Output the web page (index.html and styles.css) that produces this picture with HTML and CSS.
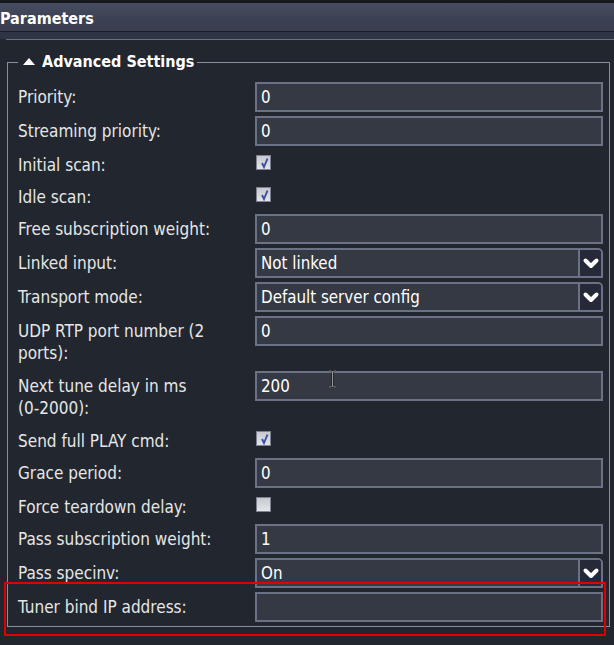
FILE: index.html
```html
<!DOCTYPE html>
<html>
<head>
<meta charset="utf-8">
<link rel="stylesheet" href="styles.css">
</head>
<body>
<div class="page">
  <div class="topbar"></div>
  <div class="header"><span class="title">Parameters</span></div>
  <div class="band"></div>
  <div class="content">
    <fieldset class="group">
      <legend class="legend"><span class="tri"></span>Advanced Settings</legend>
      <div class="rows">
        <label class="lbl">Priority:</label>
        <div class="field"><span class="val">0</span></div>

        <label class="lbl">Streaming priority:</label>
        <div class="field"><span class="val">0</span></div>

        <label class="lbl">Initial scan:</label>
        <div class="cbcell"><span class="cb checked"><svg viewBox="0 0 15 15" width="15" height="15"><path d="M6 8 L8 12 L11.5 3.5" fill="none" stroke="#3b4ea3" stroke-width="1.9"/></svg></span></div>

        <label class="lbl">Idle scan:</label>
        <div class="cbcell"><span class="cb checked"><svg viewBox="0 0 15 15" width="15" height="15"><path d="M6 8 L8 12 L11.5 3.5" fill="none" stroke="#3b4ea3" stroke-width="1.9"/></svg></span></div>

        <label class="lbl">Free subscription weight:</label>
        <div class="field"><span class="val">0</span></div>

        <label class="lbl">Linked input:</label>
        <div class="field select"><span class="val">Not linked</span><span class="arrow"><svg viewBox="0 0 18 13" width="18" height="13"><path d="M3.5 3.5 L9 9 L14.5 3.5" fill="none" stroke="#ffffff" stroke-width="4" stroke-linecap="round" stroke-linejoin="round"/></svg></span></div>

        <label class="lbl">Transport mode:</label>
        <div class="field select"><span class="val">Default server config</span><span class="arrow"><svg viewBox="0 0 18 13" width="18" height="13"><path d="M3.5 3.5 L9 9 L14.5 3.5" fill="none" stroke="#ffffff" stroke-width="4" stroke-linecap="round" stroke-linejoin="round"/></svg></span></div>

        <label class="lbl wrap">UDP RTP port number (2 ports):</label>
        <div class="field"><span class="val">0</span></div>

        <label class="lbl wrap">Next tune delay in ms <span class="nowrap">(0-2000):</span></label>
        <div class="field cursorhost"><span class="val">200</span>
          <svg class="ibeam" viewBox="0 0 9 18" width="9" height="18"><path d="M1 1 H3.5 L4.5 2 L5.5 1 H8 M4.5 2 V16 M1 17 H3.5 L4.5 16 L5.5 17 H8" fill="none" stroke="#000000" stroke-width="1.6"/><path d="M1 1 H3.5 L4.5 2 L5.5 1 H8 M4.5 2 V16 M1 17 H3.5 L4.5 16 L5.5 17 H8" fill="none" stroke="#ffffff" stroke-width="0.6"/></svg>
        </div>

        <label class="lbl">Send full PLAY cmd:</label>
        <div class="cbcell"><span class="cb checked"><svg viewBox="0 0 15 15" width="15" height="15"><path d="M6 8 L8 12 L11.5 3.5" fill="none" stroke="#3b4ea3" stroke-width="1.9"/></svg></span></div>

        <label class="lbl">Grace period:</label>
        <div class="field"><span class="val">0</span></div>

        <label class="lbl">Force teardown delay:</label>
        <div class="cbcell"><span class="cb"></span></div>

        <label class="lbl">Pass subscription weight:</label>
        <div class="field"><span class="val">1</span></div>

        <label class="lbl">Pass specinv:</label>
        <div class="field select"><span class="val">On</span><span class="arrow"><svg viewBox="0 0 18 13" width="18" height="13"><path d="M3.5 3.5 L9 9 L14.5 3.5" fill="none" stroke="#ffffff" stroke-width="4" stroke-linecap="round" stroke-linejoin="round"/></svg></span></div>

        <label class="lbl hl">Tuner bind IP address:<span class="redbox"></span></label>
        <div class="field"><span class="val"></span></div>
      </div>
    </fieldset>
  </div>
</div>
</body>
</html>
```
FILE: styles.css
```css
* { box-sizing: border-box; }
html, body {
  margin: 0;
  padding: 0;
  background: #21262f;
}
body {
  width: 614px;
  height: 645px;
  overflow: hidden;
  font-family: "DejaVu Sans Condensed", "DejaVu Sans", sans-serif;
  color: #e8e8e8;
}
.page {
  width: 614px;
  height: 645px;
  background: #21262f;
}
.topbar {
  height: 3px;
  background: #15181f;
}
.header {
  height: 29px;
  background: linear-gradient(#474d60, #3b4153 60%, #393f50);
  border-bottom: 1px solid #1a1d25;
  display: flex;
  align-items: center;
}
.title {
  font-weight: bold;
  font-size: 16px;
  color: #ffffff;
  line-height: 20px;
  margin-top: 3px;
}
.band {
  height: 7px;
  background: #2e3443;
}
.content {
  margin-left: 6px;
  border-top: 1px solid #6b7183;
  padding-top: 11px;
}
.group {
  margin: 0 0 0 1px;
  width: 603px;
  border: 1px solid #8a8f9c;
  padding: 9px 6px 4px 10px;
  min-width: 0;
}
.legend {
  padding: 0 3px 0 4px;
  font-weight: bold;
  font-size: 16px;
  line-height: 22px;
  color: #ffffff;
  display: flex;
  align-items: center;
}
.tri {
  width: 0;
  height: 0;
  border-left: 6px solid transparent;
  border-right: 6px solid transparent;
  border-bottom: 7px solid #ffffff;
  margin: 0 7px 2px 1px;
}
.rows {
  display: grid;
  grid-template-columns: 237px 348px;
  row-gap: 4px;
  align-items: start;
}
.lbl {
  font-size: 17px;
  line-height: 22px;
  padding: 4px 6px 2px 0;
  color: #e6e6e6;
}
.lbl.wrap {
  padding-bottom: 3px;
}
.nowrap {
  white-space: nowrap;
}
.field {
  height: 30px;
  border: 2px solid #6c7286;
  background: #353943;
  display: flex;
  align-items: center;
  color: #ffffff;
  font-size: 16.8px;
  position: relative;
}
.val {
  flex: 1;
  padding-left: 4px;
  white-space: nowrap;
}
.select {
  border-radius: 0 5px 0 0;
}
.arrow {
  width: 23px;
  align-self: stretch;
  background: #262a38;
  border-left: 2px solid #6c7286;
  border-radius: 0 3px 0 0;
  display: flex;
  align-items: center;
  justify-content: center;
}
.cbcell {
  height: 28px;
  display: flex;
  align-items: flex-start;
  padding-left: 1px;
  padding-top: 5px;
}
.cb {
  width: 15px;
  height: 15px;
  border: 1px solid #7d828e;
  background: linear-gradient(#c7c9d0, #e4e5e9);
  display: block;
  position: relative;
}
.cb svg {
  position: absolute;
  left: -1px;
  top: -1px;
}
.cursorhost .ibeam {
  position: absolute;
  left: 71px;
  top: -3px;
}
.hl {
  position: relative;
}
.redbox {
  position: absolute;
  left: -14px;
  top: -10px;
  width: 602px;
  height: 54px;
  border: 2px solid #e00000;
  pointer-events: none;
}
```
